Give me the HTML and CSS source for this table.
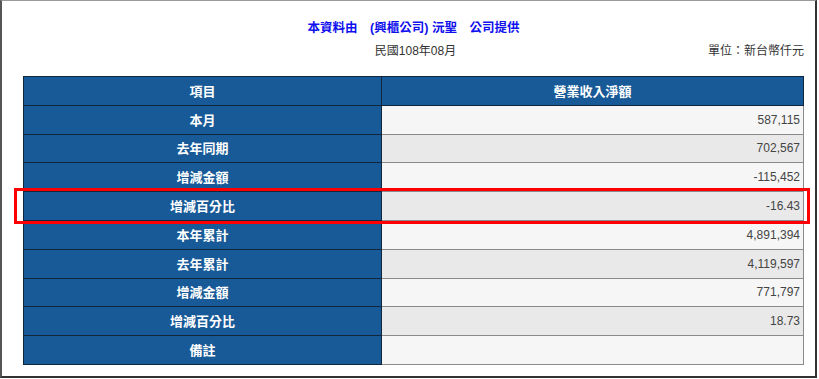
FILE: index.html
```html
<!DOCTYPE html>
<html lang="zh-Hant">
<head>
<meta charset="utf-8">
<title>營業收入淨額</title>
<link rel="stylesheet" href="styles.css">
</head>
<body>
<div class="frame">
  <div class="wrap">
    <div class="title">本資料由　(興櫃公司) 沅聖　公司提供</div>
    <div class="meta">
      <span></span>
      <span class="date">民國108年08月</span>
      <span class="unit">單位：新台幣仟元</span>
    </div>
    <div class="table-box">
      <table class="data">
        <thead>
          <tr><th class="label">項目</th><th class="label">營業收入淨額</th></tr>
        </thead>
        <tbody>
          <tr class="odd"><th class="label">本月</th><td class="num">587,115</td></tr>
          <tr class="even"><th class="label">去年同期</th><td class="num">702,567</td></tr>
          <tr class="odd"><th class="label">增減金額</th><td class="num">-115,452</td></tr>
          <tr class="even"><th class="label">增減百分比</th><td class="num">-16.43</td></tr>
          <tr class="odd"><th class="label">本年累計</th><td class="num">4,891,394</td></tr>
          <tr class="even"><th class="label">去年累計</th><td class="num">4,119,597</td></tr>
          <tr class="odd"><th class="label">增減金額</th><td class="num">771,797</td></tr>
          <tr class="even"><th class="label">增減百分比</th><td class="num">18.73</td></tr>
          <tr class="odd"><th class="label">備註</th><td class="num"></td></tr>
        </tbody>
      </table>
      <div class="highlight"></div>
    </div>
  </div>
</div>
</body>
</html>
```
FILE: styles.css
```css
html, body {
  margin: 0;
  padding: 0;
  background: #ffffff;
}
body {
  font-family: "Liberation Sans", "Noto Sans CJK TC", sans-serif;
  font-size: 12px;
  color: #333333;
}
.frame {
  box-sizing: border-box;
  width: 817px;
  height: 378px;
  border-top: 1px solid #9a9a9a;
  border-left: 2px solid #555555;
  border-right: 2px solid #333333;
  border-bottom: 2px solid #333333;
}
.wrap {
  width: 781px;
  margin-left: 21px;
  padding-top: 19px;
}
.title {
  text-align: center;
  color: #1010ee;
  font-weight: bold;
  font-size: 12.5px;
  line-height: 16px;
  font-family: "Liberation Sans", "Noto Sans CJK TC", sans-serif;
  padding-left: 0;
}
.meta {
  display: grid;
  grid-template-columns: 1fr auto 1fr;
  margin-top: 7px;
  line-height: 16px;
  color: #333333;
}
.date {
  padding-left: 4px;
}
.unit {
  text-align: right;
  padding-right: 0;
}
.table-box {
  position: relative;
  margin-top: 17px;
}
.data {
  width: 781px;
  border-collapse: collapse;
  table-layout: fixed;
}
.data tr {
  height: 28.8px;
}
.data th.label {
  width: 45.8%;
  background: #185a97;
  color: #ffffff;
  font-weight: bold;
  font-size: 13px;
  text-align: center;
  border: 1px solid #10263c;
  padding: 0;
  font-family: "Noto Sans CJK TC", sans-serif;
  line-height: 16px;
}
.data thead th.label:last-child {
  width: auto;
}
.data td.num {
  text-align: right;
  padding: 0 3px 0 0;
  border: 1px solid #8a8a8a;
  color: #444444;
  font-size: 12px;
  line-height: 16px;
}
.data tr.odd td.num {
  background: #f6f6f6;
}
.data tr.even td.num {
  background: #e9e9e9;
}
.highlight {
  position: absolute;
  left: -9px;
  top: 112px;
  width: 796px;
  height: 36px;
  box-sizing: border-box;
  border: 3px solid #ff0000;
  pointer-events: none;
}
```
